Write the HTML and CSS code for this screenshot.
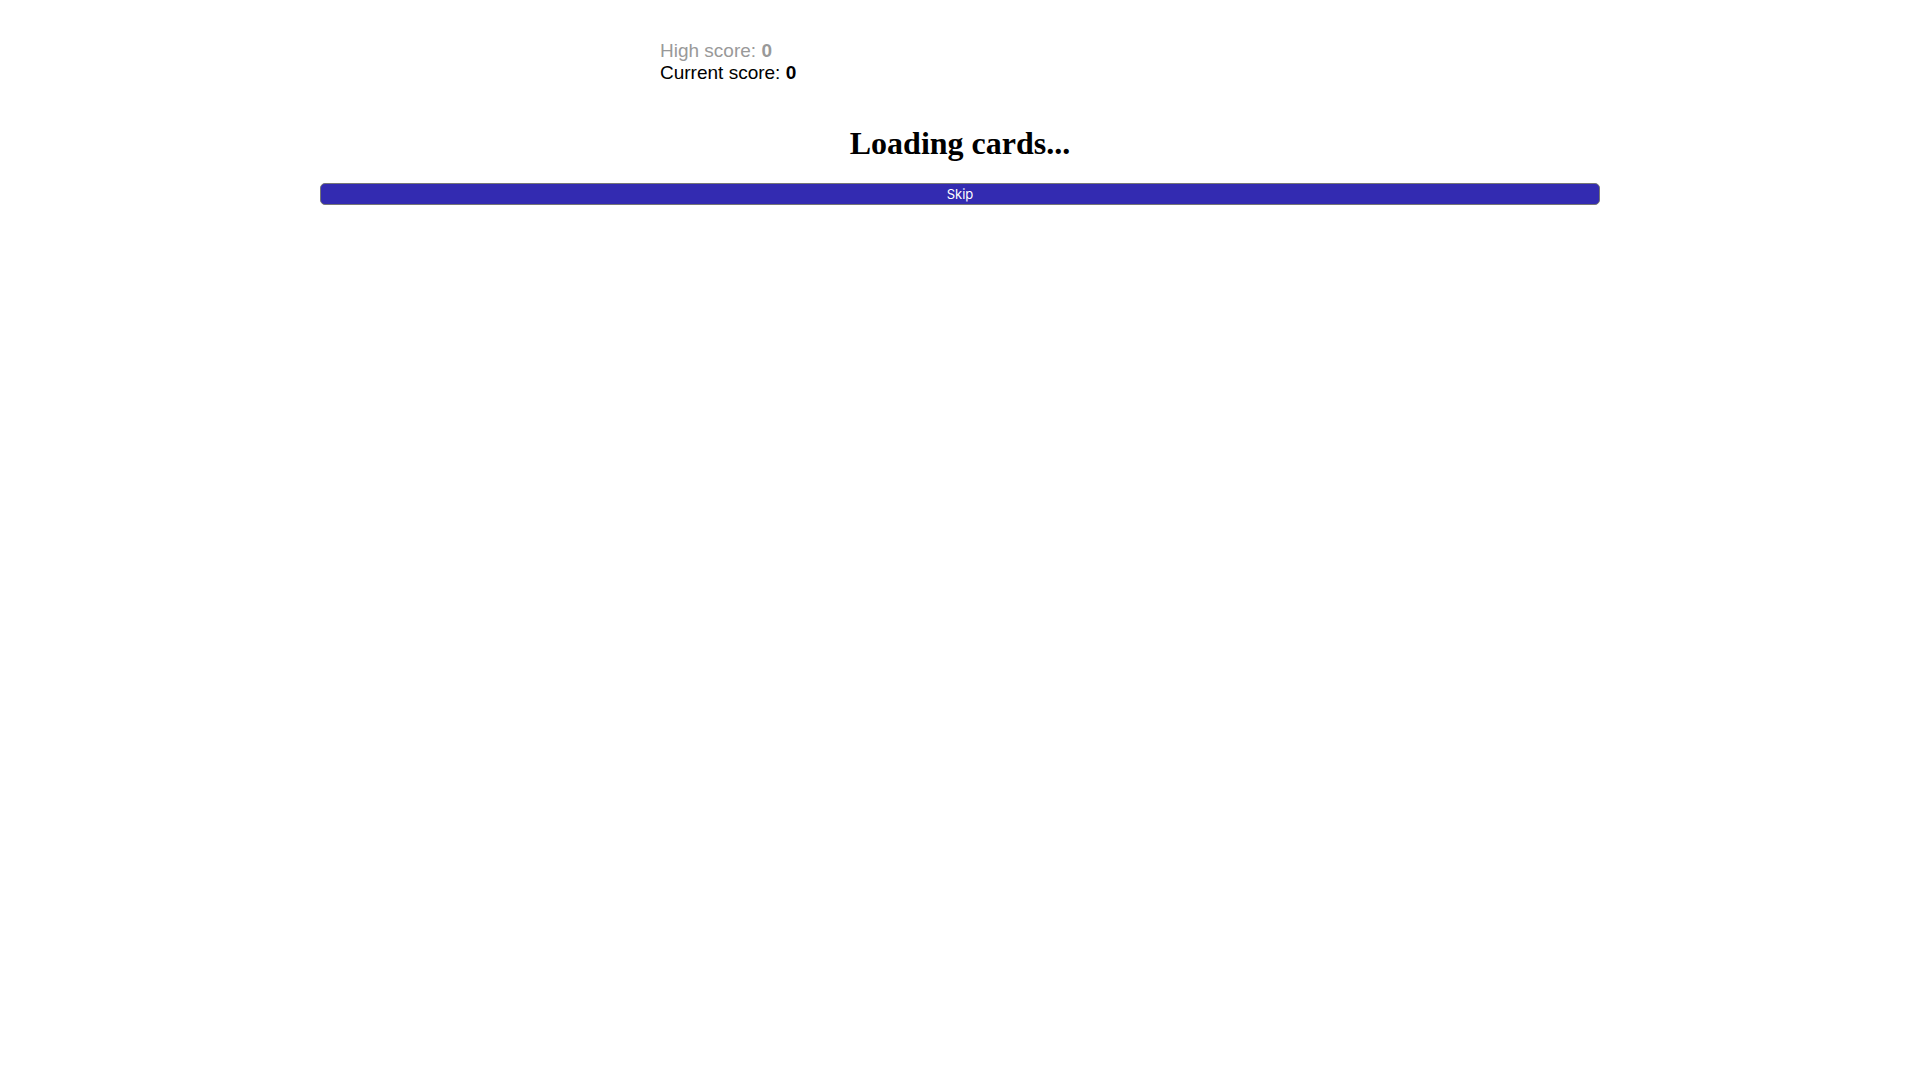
FILE: index.html
```html
<!DOCTYPE html>
<html lang="en">
<head>
  <meta charset="utf-8">
  <title>Card Game</title>
  <link rel="stylesheet" href="styles.css">
</head>
<body>
  <main class="game">
    <div class="scoreboard">
      <div class="high-score">High score: <strong>0</strong></div>
      <div class="current-score">Current score: <strong>0</strong></div>
    </div>
    <h1 class="status">Loading cards...</h1>
    <button class="skip-btn" type="button">Skip</button>
  </main>
</body>
</html>
```

FILE: styles.css
```css
body { margin: 0; background-color: #fff; }
.game { display: flex; flex-direction: column; max-width: 1280px; margin: 0 auto; padding-top: 40px; }
.scoreboard { width: 600px; max-width: 100%; margin: 0 auto; font-family: "Liberation Sans", Arial, sans-serif; font-size: 19px; line-height: 22px; }
.high-score { color: #999; }
.status { margin: 40px 0 21px; font-family: "Liberation Serif", serif; font-size: 32px; line-height: 38px; text-align: center; }
.skip-btn { padding: 3px; font-family: Inter, sans-serif; font-size: 13px; line-height: 14px; color: #fff; background-color: #332bb1; border: 1px solid #767676; border-radius: 5px; cursor: pointer; }
```
